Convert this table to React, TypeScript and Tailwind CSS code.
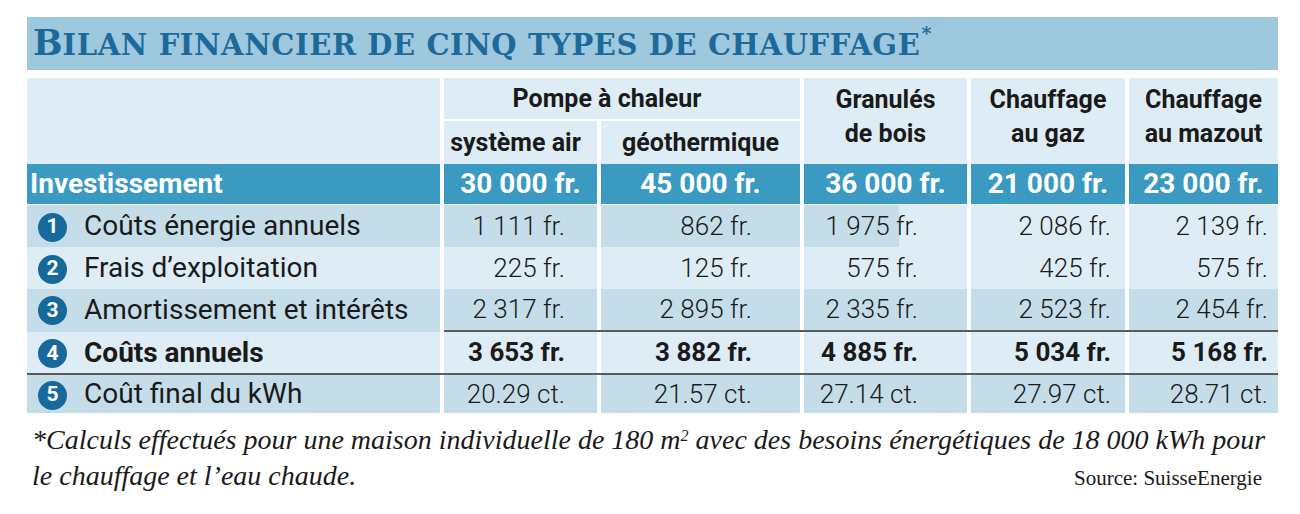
import React from 'react';

interface Row {
    num: number;
    label: string;
    values: string[];
    bold?: boolean;
}

const rows: Row[] = [
    { num: 1, label: 'Coûts énergie annuels', values: ['1 111 fr.', '862 fr.', '1 975 fr.', '2 086 fr.', '2 139 fr.'] },
    { num: 2, label: 'Frais d’exploitation', values: ['225 fr.', '125 fr.', '575 fr.', '425 fr.', '575 fr.'] },
    { num: 3, label: 'Amortissement et intérêts', values: ['2 317 fr.', '2 895 fr.', '2 335 fr.', '2 523 fr.', '2 454 fr.'] },
    { num: 4, label: 'Coûts annuels', values: ['3 653 fr.', '3 882 fr.', '4 885 fr.', '5 034 fr.', '5 168 fr.'], bold: true },
    { num: 5, label: 'Coût final du kWh', values: ['20.29 ct.', '21.57 ct.', '27.14 ct.', '27.97 ct.', '28.71 ct.'] },
];

const investments = ['30 000 fr.', '45 000 fr.', '36 000 fr.', '21 000 fr.', '23 000 fr.'];

// right padding per value column, so figures line up like the print layout
const valuePad = ['pr-[32px]', 'pr-[48px]', 'pr-[49px]', 'pr-[14px]', 'pr-[10px]'];

const DARK = 'bg-[#c5dde9]';
const LIGHT = 'bg-[#deedf5]';

// row 1 has the odd half-shaded cell under "Granulés"
const rowBg = (r: number, c: number) => {
    if (r === 0) {
        if (c <= 2) return DARK;
        if (c === 3) return 'bg-[linear-gradient(to_right,#c5dde9_58%,#deedf5_58%)]';
        return LIGHT;
    }
    return r % 2 === 0 ? DARK : LIGHT;
};

const rowHeight = ['h-[42px]', 'h-[42px]', 'h-[41px]', 'h-[41px]', 'h-[38px]'];

const App: React.FC = () => {
    return (
        <div className="w-[1300px] h-[514px] bg-white pl-[27px] pt-[17px] font-['Roboto','Liberation_Sans',sans-serif] text-[#1a1a1a]">
            <div className="w-[1251px]">
                {/* Title bar */}
                <div className="h-[53px] bg-[#9dc8de] pl-[6px] flex items-end pb-[10px] font-['DejaVu_Serif','Liberation_Serif',serif] font-bold text-[#1d6a9a] leading-none">
                    <span className="text-[35px]">B</span>
                    <span className="text-[29px] tracking-[0.6px]">ILAN FINANCIER DE CINQ TYPES DE CHAUFFAGE</span>
                    <span className="text-[19px] self-start mt-[7px] ml-[1px]">*</span>
                </div>

                <div className="grid grid-cols-[413px_153px_199px_163px_154px_149px] gap-x-[4px] mt-[8px]">
                    {/* Header */}
                    <div className={`row-span-2 ${LIGHT}`} />
                    <div className={`col-span-2 h-[41px] ${LIGHT} flex items-center justify-center pr-[30px] text-[25px] font-bold`}>
                        Pompe à chaleur
                    </div>
                    <div className={`row-span-2 ${LIGHT} flex flex-col items-center justify-center pb-[8px] text-[25px] font-bold leading-[34px]`}>
                        <span>Granulés</span>
                        <span>de bois</span>
                    </div>
                    <div className={`row-span-2 ${LIGHT} flex flex-col items-center justify-center pb-[8px] text-[25px] font-bold leading-[34px]`}>
                        <span>Chauffage</span>
                        <span>au gaz</span>
                    </div>
                    <div className={`row-span-2 ${LIGHT} flex flex-col items-center justify-center pb-[8px] text-[25px] font-bold leading-[34px]`}>
                        <span>Chauffage</span>
                        <span>au mazout</span>
                    </div>
                    <div className={`mt-[2px] h-[43px] ${LIGHT} flex items-center justify-center pr-[10px] text-[25px] font-bold`}>
                        système air
                    </div>
                    <div className={`mt-[2px] h-[43px] ${LIGHT} flex items-center justify-center text-[25px] font-bold`}>
                        géothermique
                    </div>

                    {/* Investissement */}
                    <div className="h-[40px] bg-[#3a9ac1] flex items-center pl-[3px] text-white text-[28px] font-bold">
                        Investissement
                    </div>
                    {investments.map((v) => (
                        <div key={v} className="h-[40px] bg-[#3a9ac1] flex items-center justify-center text-white text-[28px] font-bold whitespace-nowrap">
                            {v}
                        </div>
                    ))}
                    <div className="col-span-full h-px" />

                    {/* Data rows */}
                    {rows.map((row, r) => (
                        <React.Fragment key={row.num}>
                            {row.num === 4 && (
                                <>
                                    <div className={`h-[2px] ${DARK}`} />
                                    <div className="col-span-5 h-[2px] bg-[#5b5b5b]" />
                                </>
                            )}
                            {row.num === 5 && <div className="col-span-full h-[2px] bg-[#5b5b5b]" />}
                            <div className={`${rowHeight[r]} ${rowBg(r, 0)} flex items-center pl-[11px]`}>
                                <span className="w-[29px] h-[29px] mt-[2px] rounded-full bg-[#17699b] text-white text-[21px] font-bold flex items-center justify-center shrink-0">
                                    {row.num}
                                </span>
                                <span className={`ml-[17px] text-[28px] whitespace-nowrap ${row.bold ? 'font-bold' : 'font-normal'}`}>
                                    {row.label}
                                </span>
                            </div>
                            {row.values.map((v, c) => (
                                <div
                                    key={c}
                                    className={`${rowHeight[r]} ${rowBg(r, c + 1)} ${valuePad[c]} flex items-center justify-end text-[26px] whitespace-nowrap ${row.bold ? 'font-bold' : 'font-light'}`}
                                >
                                    {v}
                                </div>
                            ))}
                        </React.Fragment>
                    ))}
                </div>

                {/* Footnote */}
                <div className="mt-[9px] pl-[5px] font-['Liberation_Serif',serif] text-[#1a1a1a]">
                    <div className="italic text-[28px] leading-[36px] whitespace-nowrap">
                        *Calculs effectués pour une maison individuelle de 180 m<sup className="text-[16px]">2</sup> avec des besoins énergétiques de 18 000 kWh pour
                    </div>
                    <div className="flex items-baseline justify-between pr-[16px]">
                        <span className="italic text-[28px] leading-[36px]">le chauffage et l’eau chaude.</span>
                        <span className="text-[21px]">Source: SuisseEnergie</span>
                    </div>
                </div>
            </div>
        </div>
    );
};

export default App;
